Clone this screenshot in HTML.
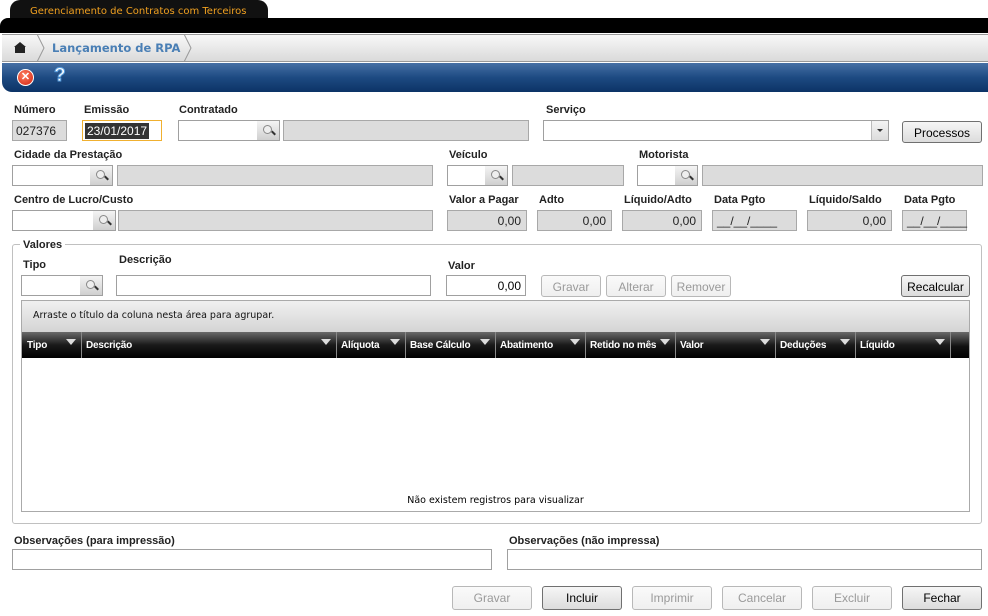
<!DOCTYPE html>
<html><head><meta charset="utf-8"><style>
*{box-sizing:border-box;margin:0;padding:0}
body{width:988px;height:616px;background:#fff;font-family:"Liberation Sans",Arial,sans-serif;font-size:12px;color:#000;position:relative;overflow:hidden}
.a{position:absolute}
.lbl{position:absolute;font-weight:bold;font-size:11px;color:#222;margin-top:1px}
.in{position:absolute;height:21px;border:1px solid #a0a0a0;background:#fff}
.ro{position:absolute;height:21px;border:1px solid #a8a8a8;background:#dcdcdc;font-size:12px;text-align:right;padding:3px 5px 0 0;color:#222}
.sb{position:absolute;height:21px;width:23px;border:1px solid #a0a0a0;border-left:none;background:linear-gradient(#f4f4f4,#cfcfcf)}
.sb:after{content:"";position:absolute;left:6px;top:4px;width:7px;height:7px;border:1px solid #888;border-radius:50%;background:#eee}
.sb:before{content:"";position:absolute;left:14px;top:11px;width:5px;height:2px;background:#333;transform:rotate(45deg)}
.btn{position:absolute;height:22px;border:1px solid #707070;border-radius:3px;background:linear-gradient(#f6f6f6,#dcdcdc);text-align:center;font-size:12px;padding-top:4px;color:#000}
.dis{border-color:#b8b8b8;color:#9a9a9a;background:linear-gradient(#fafafa,#efefef)}
.hd{position:absolute;top:332px;height:26px;background:linear-gradient(#6a6a6a,#1a1a1a 50%,#000);border-right:1px solid #888;color:#fff;font-size:10px;padding:8px 0 0 4px;font-weight:bold;letter-spacing:-0.2px}
.hd i{position:absolute;right:5px;top:7px;width:0;height:0;border-left:5px solid transparent;border-right:5px solid transparent;border-top:6px solid #ddd}
</style></head><body>
<div class="a" style="left:10px;top:0;width:258px;height:24px;background:#111;border-radius:10px 10px 0 0"></div>
<div class="a" style="left:30px;top:6px;color:#f0a020;font-family:'DejaVu Sans',sans-serif;font-size:10px">Gerenciamento de Contratos com Terceiros</div>
<div class="a" style="left:0;top:18px;width:988px;height:15px;background:#000;border-radius:8px 0 0 0"></div>
<div class="a" style="left:2px;top:34px;width:986px;height:28px;background:linear-gradient(#f8f8f8,#dadada);border-top:1px solid #999;border-bottom:1px solid #999"></div>
<div class="a" style="left:14px;top:42px;width:0;height:0;border-left:6px solid transparent;border-right:6px solid transparent;border-bottom:5px solid #222"></div>
<div class="a" style="left:15px;top:47px;width:10px;height:6px;background:#222"></div>
<svg class="a" style="left:36px;top:34px" width="160" height="28"><path d="M1 0 L8 14 L1 28" stroke="#999" fill="none"/><path d="M148 0 L155 14 L148 28" stroke="#999" fill="none"/></svg>
<div class="a" style="left:52px;top:41px;font-weight:bold;color:#4a7fb5;font-family:'DejaVu Sans',sans-serif;font-size:11.5px">Lançamento de RPA</div>
<div class="a" style="left:2px;top:63px;width:986px;height:29px;background:linear-gradient(#4670a5,#1d4a82 50%,#0c3366);border-radius:0 0 0 10px"></div>
<div class="a" style="left:17px;top:69px;width:17px;height:17px;border-radius:50%;background:radial-gradient(circle at 40% 35%,#ff8060,#d02010);border:1px solid #fff;color:#fff;font-weight:bold;font-size:11px;text-align:center;line-height:15px">✕</div>
<div class="a" style="left:54px;top:65px;color:#fff;font-size:19px;font-weight:bold;-webkit-text-stroke:1px #5aa0e0">?</div>

<div class="lbl" style="left:14px;top:103px">Número</div>
<div class="lbl" style="left:84px;top:103px">Emissão</div>
<div class="lbl" style="left:179px;top:103px">Contratado</div>
<div class="lbl" style="left:546px;top:103px">Serviço</div>
<div class="ro" style="left:12px;top:120px;width:55px;text-align:left;padding-left:3px">027376</div>
<div class="in" style="left:82px;top:120px;width:80px;border-color:#f0b030"><span style="position:absolute;left:2px;top:2px;background:#333;color:#fff;font-size:12px;padding:1px 2px">23/01/2017</span></div>
<div class="in" style="left:178px;top:120px;width:80px"></div><div class="sb" style="left:257px;top:120px"></div>
<div class="ro" style="left:283px;top:120px;width:246px"></div>
<div class="in" style="left:543px;top:120px;width:346px"><div class="a" style="right:0;top:0;width:17px;height:19px;border-left:1px solid #bbb;background:linear-gradient(#f4f4f4,#dcdcdc)"><div class="a" style="left:5px;top:8px;border-left:3px solid transparent;border-right:3px solid transparent;border-top:3px solid #333"></div></div></div>
<div class="btn" style="left:902px;top:121px;width:80px">Processos</div>

<div class="lbl" style="left:14px;top:148px">Cidade da Prestação</div>
<div class="lbl" style="left:449px;top:148px">Veículo</div>
<div class="lbl" style="left:639px;top:148px">Motorista</div>
<div class="in" style="left:12px;top:165px;width:79px"></div><div class="sb" style="left:90px;top:165px"></div>
<div class="ro" style="left:117px;top:165px;width:316px"></div>
<div class="in" style="left:447px;top:165px;width:39px"></div><div class="sb" style="left:485px;top:165px"></div>
<div class="ro" style="left:512px;top:165px;width:112px"></div>
<div class="in" style="left:637px;top:165px;width:39px"></div><div class="sb" style="left:675px;top:165px"></div>
<div class="ro" style="left:702px;top:165px;width:281px"></div>

<div class="lbl" style="left:14px;top:193px">Centro de Lucro/Custo</div>
<div class="lbl" style="left:449px;top:193px">Valor a Pagar</div>
<div class="lbl" style="left:539px;top:193px">Adto</div>
<div class="lbl" style="left:624px;top:193px">Líquido/Adto</div>
<div class="lbl" style="left:714px;top:193px">Data Pgto</div>
<div class="lbl" style="left:809px;top:193px">Líquido/Saldo</div>
<div class="lbl" style="left:904px;top:193px">Data Pgto</div>
<div class="in" style="left:12px;top:210px;width:82px"></div><div class="sb" style="left:93px;top:210px"></div>
<div class="ro" style="left:118px;top:210px;width:315px"></div>
<div class="ro" style="left:447px;top:210px;width:80px">0,00</div>
<div class="ro" style="left:537px;top:210px;width:75px">0,00</div>
<div class="ro" style="left:622px;top:210px;width:80px">0,00</div>
<div class="ro" style="left:712px;top:210px;width:85px;text-align:left;padding-left:4px">__/__/____</div>
<div class="ro" style="left:807px;top:210px;width:85px">0,00</div>
<div class="ro" style="left:902px;top:210px;width:65px;text-align:left;padding-left:4px">__/__/____</div>

<div class="a" style="left:12px;top:244px;width:970px;height:280px;border:1px solid #c0c0c0;border-radius:3px"></div>
<div class="lbl" style="left:20px;top:238px;background:#fff;padding:0 3px">Valores</div>
<div class="lbl" style="left:23px;top:258px">Tipo</div>
<div class="lbl" style="left:119px;top:253px">Descrição</div>
<div class="lbl" style="left:448px;top:259px">Valor</div>
<div class="in" style="left:21px;top:275px;width:60px"></div><div class="sb" style="left:80px;top:275px"></div>
<div class="in" style="left:116px;top:275px;width:315px"></div>
<div class="in" style="left:446px;top:275px;width:80px;text-align:right;padding:3px 4px 0 0">0,00</div>
<div class="btn dis" style="left:541px;top:275px;width:60px">Gravar</div>
<div class="btn dis" style="left:606px;top:275px;width:60px">Alterar</div>
<div class="btn dis" style="left:671px;top:275px;width:60px">Remover</div>
<div class="btn" style="left:901px;top:275px;width:69px">Recalcular</div>

<div class="a" style="left:21px;top:300px;width:949px;height:212px;border:1px solid #aaa"></div>
<div class="a" style="left:22px;top:301px;width:947px;height:31px;background:linear-gradient(#f0f0f0,#d4d4d4)"></div>
<div class="a" style="left:33px;top:310px;font-family:'DejaVu Sans',sans-serif;font-size:9.5px;color:#111">Arraste o título da coluna nesta área para agrupar.</div>
<div class="a" style="left:22px;top:332px;width:947px;height:26px;background:linear-gradient(#6a6a6a,#111 55%,#000)"></div>
<div class="hd" style="left:23px;width:59px">Tipo<i></i></div>
<div class="hd" style="left:82px;width:255px">Descrição<i></i></div>
<div class="hd" style="left:337px;width:69px">Alíquota<i></i></div>
<div class="hd" style="left:406px;width:90px">Base Cálculo<i></i></div>
<div class="hd" style="left:496px;width:90px">Abatimento<i></i></div>
<div class="hd" style="left:586px;width:90px;overflow:hidden">Retido no mês<i></i></div>
<div class="hd" style="left:676px;width:100px">Valor<i></i></div>
<div class="hd" style="left:776px;width:80px">Deduções<i></i></div>
<div class="hd" style="left:856px;width:95px">Líquido<i></i></div>
<div class="a" style="left:22px;top:495px;width:947px;text-align:center;font-size:9.5px;font-family:'DejaVu Sans',sans-serif">Não existem registros para visualizar</div>

<div class="lbl" style="left:14px;top:534px">Observações (para impressão)</div>
<div class="lbl" style="left:509px;top:534px">Observações (não impressa)</div>
<div class="in" style="left:12px;top:549px;width:480px"></div>
<div class="in" style="left:507px;top:549px;width:475px"></div>

<div class="btn dis" style="left:452px;top:586px;width:80px;height:24px">Gravar</div>
<div class="btn" style="left:542px;top:586px;width:80px;height:24px">Incluir</div>
<div class="btn dis" style="left:632px;top:586px;width:80px;height:24px">Imprimir</div>
<div class="btn dis" style="left:722px;top:586px;width:80px;height:24px">Cancelar</div>
<div class="btn dis" style="left:812px;top:586px;width:80px;height:24px">Excluir</div>
<div class="btn" style="left:902px;top:586px;width:80px;height:24px">Fechar</div>
</body></html>
